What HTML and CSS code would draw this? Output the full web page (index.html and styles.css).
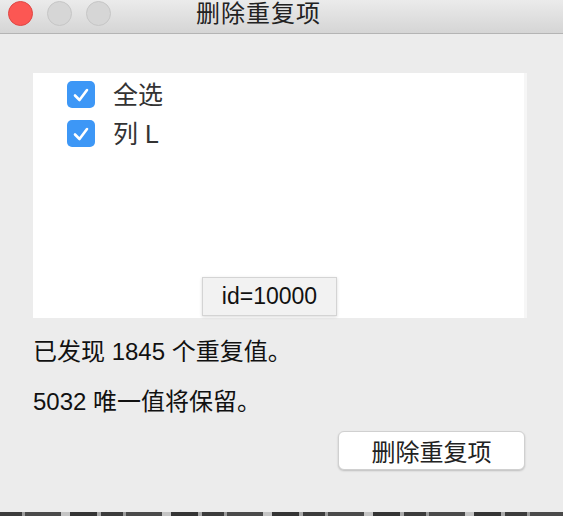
FILE: index.html
```html
<!DOCTYPE html>
<html lang="zh-CN">
<head>
    <meta charset="UTF-8">
    <title>删除重复项</title>
    <link rel="stylesheet" href="styles.css">
</head>
<body>
    <div class="window">
        <header class="titlebar">
            <div class="lights">
                <span class="light close"></span>
                <span class="light"></span>
                <span class="light"></span>
            </div>
            <div class="title">删除重复项</div>
        </header>
        <div class="content">
            <div class="list-box">
                <label class="check-row">
                    <span class="checkbox">
                        <svg viewBox="0 0 28 28" width="28" height="28"><path d="M8 14.5 L12.5 19 L20 9" fill="none" stroke="#fff" stroke-width="2.6" stroke-linecap="round" stroke-linejoin="round"/></svg>
                    </span>
                    <span class="check-label">全选</span>
                </label>
                <label class="check-row">
                    <span class="checkbox">
                        <svg viewBox="0 0 28 28" width="28" height="28"><path d="M8 14.5 L12.5 19 L20 9" fill="none" stroke="#fff" stroke-width="2.6" stroke-linecap="round" stroke-linejoin="round"/></svg>
                    </span>
                    <span class="check-label">列 L</span>
                </label>
                <div class="tooltip">id=10000</div>
            </div>
            <p class="info first">已发现 1845 个重复值。</p>
            <p class="info">5032 唯一值将保留。</p>
            <div class="actions">
                <button class="remove-btn">删除重复项</button>
            </div>
        </div>
        <div class="behind"></div>
    </div>
</body>
</html>
```

FILE: styles.css
```css
* {
    margin: 0;
    padding: 0;
    box-sizing: border-box;
}

body {
    background: #ececec;
    font-family: "Liberation Sans", "Noto Sans CJK SC", sans-serif;
    color: #222;
    width: 563px;
    height: 516px;
    overflow: hidden;
}

.window {
    height: 516px;
    display: flex;
    flex-direction: column;
}

.titlebar {
    height: 34px;
    background: linear-gradient(#ebebeb, #d5d5d5);
    border-bottom: 1px solid #b4b4b4;
    display: flex;
    align-items: flex-start;
}

.lights {
    display: flex;
    gap: 14px;
    padding: 1px 0 0 8px;
}

.light {
    width: 25px;
    height: 25px;
    border-radius: 50%;
    background: #d6d6d6;
    border: 1px solid #c6c6c6;
}

.light.close {
    background: #fc5753;
    border-color: #df4744;
}

.title {
    margin-left: 85px;
    font-size: 24px;
    line-height: 27px;
    color: #222;
    letter-spacing: 1px;
}

.content {
    flex: 1;
    padding: 39px 36px 0 33px;
}

.list-box {
    position: relative;
    height: 245px;
    background: #fff;
    border-right: 3px solid #f6f6f6;
    padding: 8px 0 0 34px;
    display: flex;
    flex-direction: column;
    gap: 12px;
}

.check-row {
    display: flex;
    align-items: center;
    gap: 18px;
    height: 27px;
}

.checkbox {
    width: 28px;
    height: 27px;
    border-radius: 5px;
    background: #3d97f6;
    display: flex;
    align-items: center;
    justify-content: center;
}

.check-label {
    font-size: 25px;
    color: #333;
    line-height: 24px;
}

.tooltip {
    position: absolute;
    left: 169px;
    top: 204px;
    width: 135px;
    height: 39px;
    background: #f2f2f2;
    border: 1px solid #d4d4d4;
    box-shadow: 0 1px 3px rgba(0, 0, 0, 0.15);
    font-size: 23px;
    line-height: 37px;
    text-align: center;
    color: #111;
}

.info {
    font-size: 24px;
    line-height: 30px;
    color: #111;
}

.info.first {
    margin-top: 19px;
}

.info + .info {
    margin-top: 20px;
}

.actions {
    display: flex;
    justify-content: flex-end;
    margin-top: 14px;
}

.remove-btn {
    width: 187px;
    height: 39px;
    background: #fff;
    border: 1px solid #d0d0d0;
    border-radius: 6px;
    box-shadow: 0 1px 2px rgba(0, 0, 0, 0.2);
    font-family: "Noto Sans CJK SC", sans-serif;
    font-size: 24px;
    color: #222;
    margin-right: 2px;
}

.behind {
    height: 4px;
    background: repeating-linear-gradient(90deg, #3c3c3c 0 22px, #9a9a9a 22px 25px, #4a4a4a 25px 61px, #c4c4c4 61px 70px, #353535 70px 97px, #a8a8a8 97px 101px);
}
```
